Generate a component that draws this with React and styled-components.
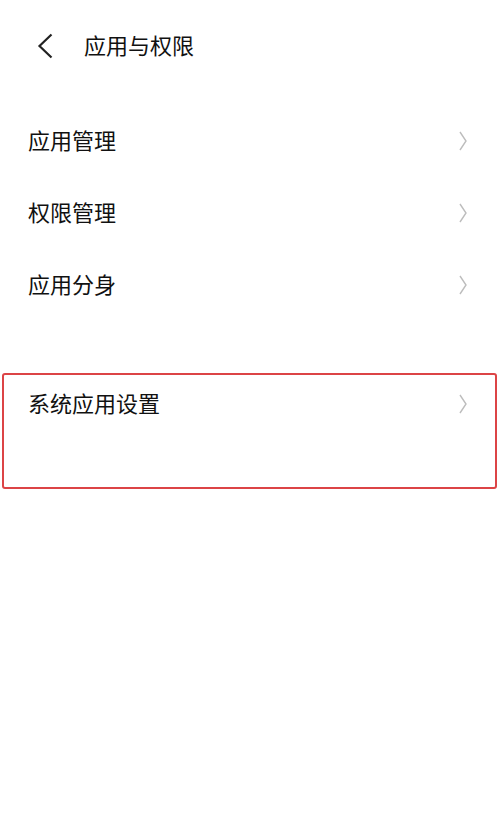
import React from 'react';
import styled, { createGlobalStyle } from 'styled-components';

const GlobalStyle = createGlobalStyle`
  html, body {
    margin: 0;
    padding: 0;
    background: #fff;
  }
  body {
    font-family: "Noto Sans CJK SC", "Noto Sans", sans-serif;
    color: #111;
  }
`;

const Page = styled.div`
  width: 500px;
  min-height: 834px;
  background: #fff;
`;

const Header = styled.header`
  height: 92px;
  display: flex;
  align-items: center;
  padding-left: 37px;
`;

const BackButton = styled.button`
  border: 0;
  background: transparent;
  padding: 0;
  display: flex;
  align-items: center;
  cursor: pointer;
`;

const Title = styled.h1`
  margin: 0 0 0 31px;
  padding-bottom: 4px;
  font-size: 22px;
  font-weight: 400;
  line-height: 1;
  color: #111;
`;

const List = styled.div`
  margin-top: 13px;
  display: flex;
  flex-direction: column;
`;

const Row = styled.div`
  height: ${(p) => p.$height || 72}px;
  display: flex;
  align-items: center;
  justify-content: space-between;
  padding: 0 ${(p) => p.$right || 33}px 0 ${(p) => p.$left || 28}px;
`;

const Label = styled.span`
  padding-bottom: 5px;
  font-size: 22px;
  font-weight: 400;
  line-height: 1;
  color: #111;
`;

const Highlight = styled.section`
  margin: 52px 3px 0 2px;
  border: 2px solid #dc4446;
  border-radius: 3px;
  padding-bottom: 54px;
`;

const Chevron = () => (
  <svg width="8" height="20" viewBox="0 0 8 20" fill="none">
    <polyline points="1,1 7,10 1,19" stroke="#bdbdbd" strokeWidth="1.4" />
  </svg>
);

const BackIcon = () => (
  <svg width="16" height="26" viewBox="0 0 16 26" fill="none">
    <polyline points="14.5,1.5 2.5,13 14.5,24.5" stroke="#222" strokeWidth="2.2" />
  </svg>
);

const items = ['应用管理', '权限管理', '应用分身'];

export default function App() {
  return (
    <Page>
      <GlobalStyle />
      <Header>
        <BackButton aria-label="back">
          <BackIcon />
        </BackButton>
        <Title>应用与权限</Title>
      </Header>
      <List>
        {items.map((t) => (
          <Row key={t}>
            <Label>{t}</Label>
            <Chevron />
          </Row>
        ))}
      </List>
      <Highlight>
        <Row $height={58} $left={24} $right={28}>
          <Label>系统应用设置</Label>
          <Chevron />
        </Row>
      </Highlight>
    </Page>
  );
}
